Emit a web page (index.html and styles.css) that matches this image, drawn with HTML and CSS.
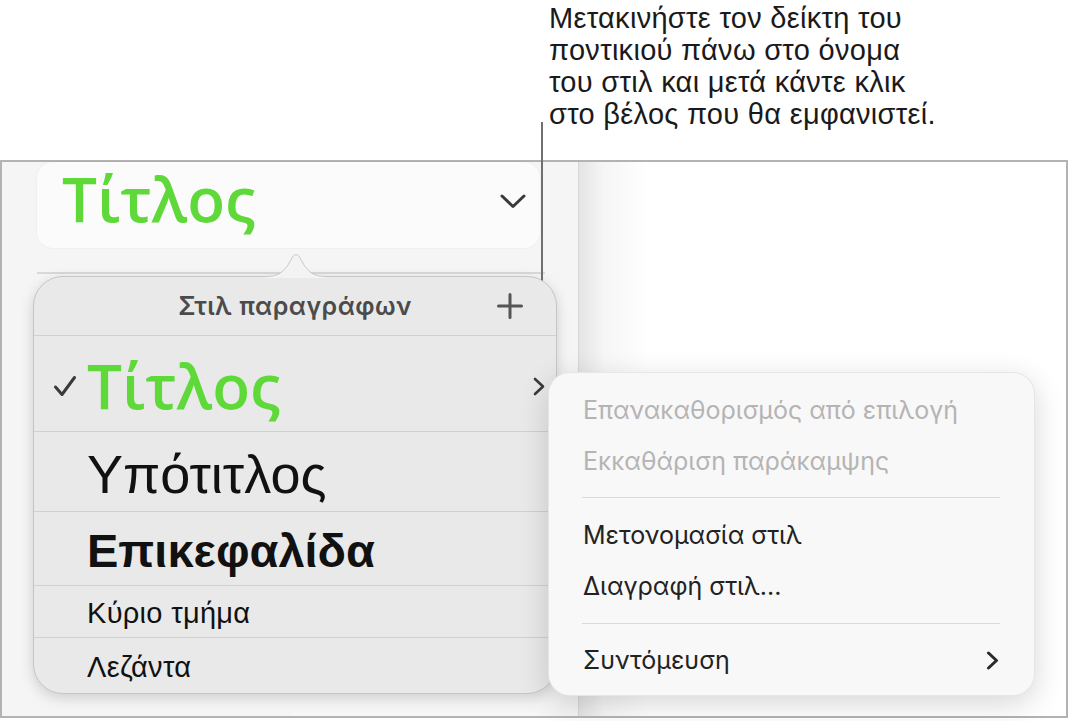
FILE: index.html
```html
<!DOCTYPE html>
<html lang="el">
<head>
<meta charset="utf-8">
<title>Στιλ παραγράφων</title>
<link rel="stylesheet" href="styles.css">
</head>
<body>
<div class="page">
  <div class="callout-area">
    <p class="callout">Μετακινήστε τον δείκτη του<br>ποντικιού πάνω στο όνομα<br>του στιλ και μετά κάντε κλικ<br>στο βέλος που θα εμφανιστεί.</p>
  </div>
  <div class="frame">
    <aside class="sidebar">
      <div class="style-box">
        <span class="style-name">Τίτλος</span>
        <svg class="chev-down" width="26" height="15" viewBox="0 0 26 15"><polyline points="2,2 13,12.5 24,2" fill="none" stroke="#3a3a3a" stroke-width="3" stroke-linecap="round" stroke-linejoin="round"/></svg>
      </div>
      <div class="rule"></div>
      <div class="foot"></div>
    </aside>
    <main class="canvas"></main>
  </div>

  <div class="leader"></div>

  <div class="popover">
    <svg class="notch" width="62" height="26" viewBox="0 0 62 26"><path d="M0,24.5 C13,24.5 17,21 23,13 L27.5,5 Q31,0 34.5,5 L39,13 C45,21 49,24.5 62,24.5 L62,26 L0,26 Z" fill="#f2f3f2"/><path d="M0,24.5 C13,24.5 17,21 23,13 L27.5,5 Q31,0 34.5,5 L39,13 C45,21 49,24.5 62,24.5" fill="none" stroke="#c9c9c9" stroke-width="1"/></svg>
    <div class="pop-head">
      <span class="pop-title">Στιλ παραγράφων</span>
      <svg class="plus" width="26" height="26" viewBox="0 0 26 26"><path d="M13,1.5 V24.5 M1.5,13 H24.5" stroke="#555" stroke-width="3" stroke-linecap="round"/></svg>
    </div>
    <ul class="styles">
      <li class="row row-title">
        <span class="mark"><svg width="24" height="22" viewBox="0 0 24 22"><polyline points="2.5,12 9,19.5 21.5,2.5" fill="none" stroke="#3a3a3a" stroke-width="3" stroke-linecap="round" stroke-linejoin="round"/></svg></span>
        <span class="txt t-title">Τίτλος</span>
        <svg class="chev-right" width="12" height="19" viewBox="0 0 12 19"><polyline points="2,2 10,9.5 2,17" fill="none" stroke="#3a3a3a" stroke-width="2.6" stroke-linecap="round" stroke-linejoin="round"/></svg>
      </li>
      <li class="row row-sub"><span class="mark"></span><span class="txt t-sub">Υπότιτλος</span></li>
      <li class="row row-head"><span class="mark"></span><span class="txt t-head">Επικεφαλίδα</span></li>
      <li class="row row-body"><span class="mark"></span><span class="txt t-body">Κύριο τμήμα</span></li>
      <li class="row row-cap"><span class="mark"></span><span class="txt t-body">Λεζάντα</span></li>
    </ul>
  </div>

  <div class="menu">
    <div class="item disabled">Επανακαθορισμός από επιλογή</div>
    <div class="item disabled">Εκκαθάριση παράκαμψης</div>
    <div class="sep"></div>
    <div class="item">Μετονομασία στιλ</div>
    <div class="item">Διαγραφή στιλ...</div>
    <div class="sep sep2"></div>
    <div class="item has-sub">Συντόμευση
      <svg width="13" height="19" viewBox="0 0 13 19"><polyline points="2.5,2 10.5,9.5 2.5,17" fill="none" stroke="#2a2a2a" stroke-width="3" stroke-linecap="round" stroke-linejoin="round"/></svg>
    </div>
  </div>
</div>
</body>
</html>
```

FILE: styles.css
```css
* { box-sizing: border-box; }
html, body { margin: 0; padding: 0; background: #fff; }
body { font-family: "Liberation Sans", Arial, sans-serif; color: #1d1d1d; }

.page { position: relative; width: 1069px; height: 721px; overflow: hidden; }

.callout-area { height: 160px; padding-left: 549px; }
.callout { margin: 0; padding-top: 2px; font-size: 29px; line-height: 32px; letter-spacing: 0.3px; color: #1a1a1a; }

.frame {
  display: flex;
  width: 1068px;
  height: 558px;
  border: 2px solid #b3b3b3;
}

.sidebar {
  width: 577px;
  flex: none;
  display: flex;
  flex-direction: column;
  background: #f5f5f5;
  border-right: 1px solid #d7d7d7;
}

.style-box {
  display: flex;
  align-items: flex-start;
  margin-left: 35px;
  width: 503px;
  height: 86px;
  padding: 5px 14px 0 25px;
  background: #fbfbfb;
  border-radius: 16px;
  box-shadow: 0 0 0 1px rgba(0,0,0,0.025);
}
.style-name {
  font-family: "Open Sans", "Noto Sans", sans-serif;
  font-weight: 600;
  font-size: 62px;
  line-height: 63px;
  color: #5fd93a;
}
.chev-down { margin-left: auto; margin-top: 27px; }

.rule { margin: 24px 0 0 35px; width: 508px; height: 2px; background: #d9d9d9; }
.foot { margin: auto 0 0 288px; width: 252px; height: 4px; background: #f7f7f7; border-radius: 6px 6px 0 0; }

.canvas { flex: 1; background: linear-gradient(to right, #e4e4e4 0, #f6f6f6 25px, #ffffff 70px); }

.leader { position: absolute; left: 541px; top: 122px; width: 2px; height: 255px; background: #707070; }

.popover {
  position: absolute;
  left: 33px;
  top: 276px;
  width: 524px;
  background: #e9e9e9;
  border: 1px solid #c6c6c6;
  border-radius: 30px;
  box-shadow: 0 4px 14px rgba(0,0,0,0.16);
}
.notch { position: absolute; left: 231px; top: -25px; }

.pop-head {
  position: relative;
  height: 59px;
  display: flex;
  align-items: center;
  justify-content: center;
  border-bottom: 1px solid #d0d0d0;
}
.pop-title { font-family: "Inter", "Noto Sans", sans-serif; font-weight: 600; font-size: 25px; color: #4b4b4b; letter-spacing: 0.5px; }
.plus { position: absolute; right: 33px; top: 16px; }

.styles { list-style: none; margin: 0; padding: 0; }
.row { display: flex; align-items: flex-start; padding-left: 19px; border-bottom: 1px solid #d0d0d0; color: #111; }
.row:last-child { border-bottom: 0; }
.mark { width: 34px; flex: none; }
.txt { white-space: nowrap; }

.row-title { height: 96px; padding-top: 14px; }
.row-title .mark svg { margin-top: 25px; display: block; }
.t-title { font-family: "Open Sans", "Noto Sans", sans-serif; font-weight: 600; font-size: 62px; line-height: 70px; color: #5fd93a; }
.chev-right { margin-left: auto; margin-right: 11px; margin-top: 27px; }

.row-sub { height: 80px; padding-top: 12px; }
.t-sub { font-size: 54px; line-height: 60px; }
.row-head { height: 74px; padding-top: 14px; }
.t-head { font-size: 47px; line-height: 50px; font-weight: 700; }
.row-body { height: 52px; padding-top: 10px; }
.row-cap { height: 55px; padding-top: 12px; }
.t-body { font-size: 29px; line-height: 34px; letter-spacing: 0.3px; }

.menu {
  position: absolute;
  left: 548px;
  top: 372px;
  width: 487px;
  padding: 12px 0 9px;
  background: #f8f8f8;
  border-radius: 22px;
  border: 1px solid rgba(0,0,0,0.07);
  box-shadow: 0 8px 30px rgba(0,0,0,0.16);
  font-family: "Inter", "Noto Sans", sans-serif;
  font-size: 25px;
}
.item { height: 51px; line-height: 51px; padding-left: 34px; color: #222; white-space: nowrap; }
.item.disabled { color: #b4b4b4; }
.sep { height: 1px; background: #dadada; margin: 10px 34px 12px 33px; }
.sep2 { margin: 11px 34px 11px 33px; }
.has-sub { display: flex; align-items: center; padding-right: 35px; }
.has-sub svg { margin-left: auto; }
```
